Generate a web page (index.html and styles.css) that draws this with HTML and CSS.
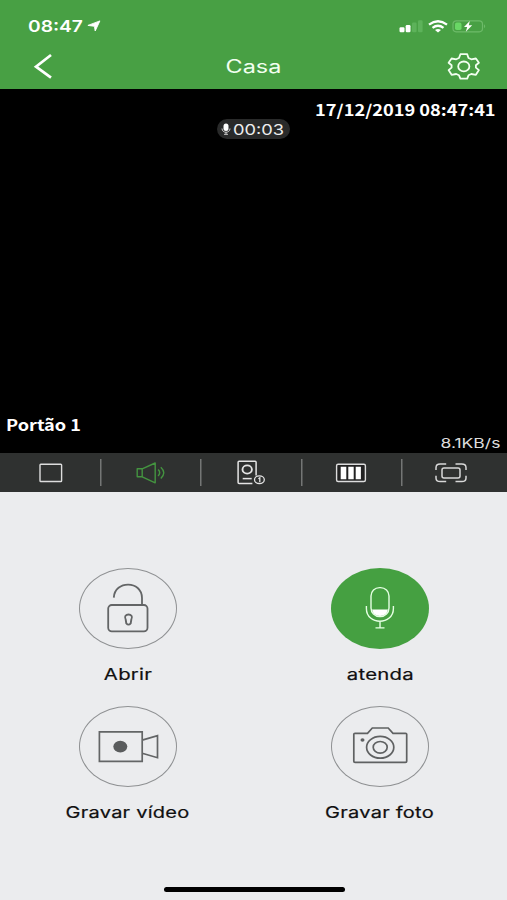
FILE: index.html
```html
<!DOCTYPE html>
<html lang="pt">
<head>
<meta charset="utf-8">
<meta name="viewport" content="width=device-width, initial-scale=1">
<title>Casa</title>
<link rel="stylesheet" href="styles.css">
</head>
<body>
<header class="header">
  <div class="status">
    <div class="clock"><span class="wide time">08:47</span>
      <svg class="arrow" width="14" height="12" viewBox="0 0 14 12"><path d="M12.9.9 8.2 11 7.4 6.3.9 5.4z" fill="#fff" stroke="#fff" stroke-width=".9" stroke-linejoin="round"/></svg>
    </div>
    <svg width="90" height="16" viewBox="0 0 90 16">
      <rect x="1.5" y="9.2" width="5" height="5" rx="1.2" fill="#fff"/>
      <rect x="7.7" y="7" width="4.8" height="7.2" rx="1.2" fill="#fff"/>
      <rect x="14" y="4.5" width="4.6" height="9.7" rx="1.2" fill="#5db25a"/>
      <rect x="20" y="2.3" width="4.6" height="11.9" rx="1.2" fill="#5db25a"/>
      <g fill="none" stroke="#fff" stroke-width="2.3">
        <path d="M31 6.6q9-6.8 18 0"/><path d="M34.5 9.8q5.5-4.2 11 0"/>
      </g>
      <path d="M37 11.9q3-1.8 6 0l-3 2.5z" fill="#fff"/>
      <rect x="55" y="2.8" width="29.5" height="11" rx="3.2" fill="none" stroke="#6dba69" stroke-width="1.2"/>
      <rect x="57" y="4.6" width="6.5" height="7.4" rx="1.8" fill="#69d765"/>
      <path d="M86 6.3q2.4 2 0 4z" fill="#6dba69"/>
      <path d="M71.8 2.9 66 9h3.2l-1.4 4.8 6.4-6.5h-3.4z" fill="#fff"/>
    </svg>
  </div>
  <nav class="nav">
    <svg class="back" width="20" height="26" viewBox="0 0 20 26"><path d="M18 2 3 13.6l15 11" fill="none" stroke="#fff" stroke-width="2.7"/></svg>
    <h1 class="wide title">Casa</h1>
    <svg width="34" height="28" viewBox="0 0 34 28" fill="none" stroke="#f2fff0" stroke-width="1.8" stroke-linejoin="round">
      <path d="M13.4 2.2h6.8l1.3 3.8 2.8 1.3 4.6-.8 3 4.2-3 2.5v2.4l3 2.5-3 4.7-4.6-.8-2.8 1.3-1.3 3.3h-6.8L12 23.3l-2.8-1.3-4.6.8-3-4.7 3-2.5v-2.4l-3-2.5 3-4.2 4.6.8L12 6z"/>
      <ellipse cx="16.8" cy="14.4" rx="5.6" ry="4.9"/>
    </svg>
  </nav>
</header>

<main>
  <section class="video">
    <p class="date"><span class="wide stamp">17/12/2019 08:47:41</span></p>
    <div class="timer">
      <svg width="10" height="12" viewBox="0 0 10 12"><rect x="2.5" y=".4" width="5" height="7.6" rx="2.5" fill="#fff"/><path d="M1 5.5c0 5 8 5 8 0M5 9v2.3M3 11.3h4" fill="none" stroke="#ddd" stroke-width=".9"/></svg>
      <span class="wide elapsed">00:03</span>
    </div>
    <p class="camera"><span class="wide channel">Portão 1</span></p>
    <p class="rate"><span class="wide speed">8.1KB/s</span></p>
  </section>

  <div class="toolbar">
    <div class="tool"><svg width="34" height="28" viewBox="0 0 34 28"><rect x="6" y="5.2" width="21.6" height="17.3" rx=".8" fill="none" stroke="#ddd" stroke-width="1.4"/></svg></div>
    <div class="tool"><svg width="34" height="28" viewBox="0 0 34 28" fill="none" stroke="#449440" stroke-width="1.4" stroke-linejoin="round"><path d="M3.2 9.8h5v8h-5zM8.2 9.8 21.2 4v19.8L8.2 17.8M24.1 10.5q3.2 3.2 0 6.5M26.8 8.2q6 5.6 0 11.2"/></svg></div>
    <div class="tool"><svg width="34" height="28" viewBox="0 0 34 28" fill="none" stroke="#e4e4e4" stroke-width="1.5"><path d="M18.4 24.4H5.1q-1 0-1-1V3.2q0-1 1-1h16q1 0 1 1v13.3"/><ellipse cx="13.2" cy="10.5" rx="4.7" ry="4.1" stroke-width="1.9"/><path d="M8.7 19.6h9"/><ellipse cx="25.4" cy="20.7" rx="4.9" ry="3.8" stroke-width="1.3"/><path d="m24.4 19.7 1.4-.9V23" stroke-width="1.3"/></svg></div>
    <div class="tool"><svg width="34" height="28" viewBox="0 0 34 28"><rect x="2.6" y="5.2" width="28.8" height="17.3" rx="1.5" fill="#222" stroke="#ddd" stroke-width="1.4"/><path d="M6.7 7.7h5.6v12.6H6.7zM14.3 7.7h5.4v12.6h-5.4zM21.7 7.7h5.2v12.6h-5.2z" fill="#fff"/></svg></div>
    <div class="tool"><svg width="34" height="28" viewBox="0 0 34 28" fill="none" stroke="#d8d8d8" stroke-width="1.5"><rect x="8" y="9.1" width="18" height="9.8" rx="2"/><path d="M2 11V8.7q0-3.6 4.2-3.6h6M2 16.7V19q0 3.6 4.2 3.6h6M21.5 5.1h6.3q4.2 0 4.2 3.6V11M21.5 22.6h6.3q4.2 0 4.2-3.6v-2.3"/></svg></div>
  </div>

  <section class="actions">
    <div class="action">
      <div class="disc"><svg width="98" height="81" viewBox="0 0 98 81" fill="none" stroke="#636566" stroke-width="1.8"><rect x="29.2" y="37" width="39.3" height="26.4" rx="3.6"/><path d="M34.8 29.6c.8-17.5 28.2-17.5 28.2.5v7"/><path d="M46.7 51.6c-3.8-6.8 9.4-6.8 5.6 0l-.6 3.8q-2.2 2.4-4.4 0z" stroke-width="1.9"/></svg></div>
      <span class="wide label">Abrir</span>
    </div>
    <div class="action">
      <div class="disc on"><svg width="98" height="81" viewBox="0 0 98 81" fill="none" stroke="#e5ffe3" stroke-width="1.4"><rect x="40" y="19.6" width="18" height="29" rx="8.5"/><path d="M41 41.6h16q-1 6.4-8 6.4t-8-6.4z" fill="#fff" stroke="none"/><path d="M35.4 38v2.5c0 17 27 17 27 0V38M49 53.3v6.4M44.5 59.9h9"/></svg></div>
      <span class="wide label answer">atenda</span>
    </div>
    <div class="action">
      <div class="disc"><svg width="98" height="81" viewBox="0 0 98 81" fill="none" stroke="#636566" stroke-width="1.7"><path d="M20.4 25.9h42.8v29.5H20.4zM63.2 34.1 78.5 29.7v22l-15.3-4.5"/><ellipse cx="41.3" cy="40.6" rx="7" ry="5.8" fill="#5a5c5d" stroke="none"/></svg></div>
      <span class="wide label capture">Gravar vídeo</span>
    </div>
    <div class="action">
      <div class="disc"><svg width="98" height="81" viewBox="0 0 98 81" fill="none" stroke="#5f6162" stroke-width="1.7"><path d="M24 27.3h12.5l4.8-5.3h15.9l4.8 5.3h12.5q1.2 0 1.2 1v27q0 1-1.2 1H24q-1.2 0-1.2-1v-27q0-1 1.2-1z"/><ellipse cx="49.2" cy="41.3" rx="13.6" ry="10.9"/><ellipse cx="49.2" cy="41.3" rx="7" ry="5.8"/><ellipse cx="31.5" cy="34" rx="2" ry="1.7" fill="#5f6162" stroke="none"/></svg></div>
      <span class="wide label capture">Gravar foto</span>
    </div>
  </section>
</main>
<footer class="home"><div class="home-bar"></div></footer>
</body>
</html>
```
FILE: styles.css
```css
* { box-sizing: border-box; }
body {
  margin: 0;
  width: 507px;
  height: 900px;
  display: flex;
  flex-direction: column;
  overflow: hidden;
  background: #ebecee;
  font-family: Inter, "Liberation Sans", sans-serif;
}
p, h1 { margin: 0; }
svg { display: block; flex: none; }
main { flex: 1; display: flex; flex-direction: column; }

/* Labels use an extended width */
.wide { display: inline-block; white-space: nowrap; transform: scaleX(1.25); }

.header { height: 89px; flex: none; background: #48a044; color: #fff; }
.status {
  height: 43px;
  padding: 9px 10px 0 28px;
  display: flex;
  justify-content: space-between;
  align-items: center;
}
.status > svg { margin-right: 9px; }
.clock { display: flex; align-items: center; }
.time { width: 59px; font-size: 16px; font-weight: 600; transform: scaleX(1.2); transform-origin: left; }
.nav {
  height: 46px;
  padding: 0 26px 0 33px;
  display: grid;
  grid-template-columns: 34px 1fr 34px;
  align-items: center;
  justify-items: center;
}
.back { justify-self: start; }
.title { margin: 1px 8px 0 0; font-size: 18px; font-weight: 400; line-height: 22px; color: #f2fff0; transform: scaleX(1.3); }

.video {
  height: 364px;
  padding: 10px 7px 0 6px;
  display: flex;
  flex-direction: column;
  background: #000;
  color: #fff;
}
.date { height: 20px; line-height: 20px; text-align: right; padding-right: 4px; }
.stamp { font: 700 15.5px/20px "Noto Sans CJK SC", sans-serif; transform: scaleX(1.175); transform-origin: right; }
.timer {
  align-self: center;
  width: 73px;
  height: 20px;
  margin-left: 1px;
  padding-left: 4px;
  display: flex;
  align-items: center;
  gap: 2px;
  border-radius: 10px;
  background: #292a2a;
}
.elapsed { font-size: 14.5px; transform: scaleX(1.26); transform-origin: left; color: #eee; }
.camera { margin-top: auto; height: 20px; line-height: 20px; }
.channel { font: 700 15.5px/20px "Noto Sans CJK SC", sans-serif; transform: scaleX(1.17); transform-origin: left; }
.rate { height: 19px; line-height: 16px; text-align: right; }
.speed { font-size: 13px; line-height: 16px; color: #ddd; transform: scaleX(1.35); transform-origin: right; }

.toolbar { height: 39px; display: grid; grid-template-columns: repeat(5, 100.2px); background: #2f3130; }
.tool { padding-left: 1px; display: flex; align-items: center; justify-content: center; }
.tool + .tool {
  background: linear-gradient(#747675, #747675) left center / 1.5px 27px no-repeat;
}

.actions {
  padding: 76px 2px 0;
  display: grid;
  grid-template-columns: repeat(2, 252px);
  grid-auto-rows: 138px;
}
.action { display: flex; flex-direction: column; align-items: center; }
.disc { width: 98px; height: 81px; border-radius: 50%; box-shadow: inset 0 0 0 1px #8f9193; }
.disc.on { background: #45a041; box-shadow: none; }
.label { margin-top: 14px; font-size: 16px; line-height: 22px; letter-spacing: .2px; color: #101010; -webkit-text-stroke: .2px #101010; transform: scaleX(1.27); }
.answer { transform: scaleX(1.27); }
.capture { transform: scaleX(1.25); }

.home { height: 13px; flex: none; display: flex; justify-content: center; }
.home-bar { width: 181px; height: 5px; margin-left: 1px; border-radius: 3px; background: #000; }
```
